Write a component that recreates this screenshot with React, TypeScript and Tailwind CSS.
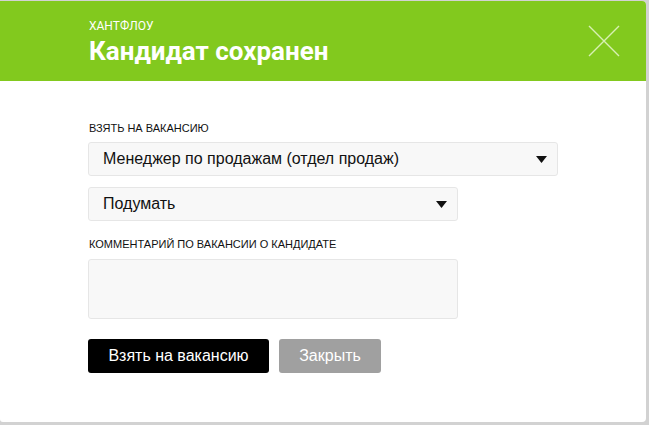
import React from 'react';

const Caret: React.FC = () => (
  <svg width="11" height="7" viewBox="0 0 11 7" className="shrink-0">
    <path d="M0 0 L11 0 L5.5 7 Z" fill="#111" />
  </svg>
);

const Select: React.FC<{ value: string; width: string }> = ({ value, width }) => (
  <div
    className={`${width} h-[34px] flex items-center justify-between pl-[14px] pr-[10px] bg-[#f8f8f8] border border-[#e6e6e6] rounded-[3px] text-[16px] text-[#111]`}
  >
    <span>{value}</span>
    <Caret />
  </div>
);

export default function App() {
  return (
    <div className="w-[649px] h-[425px] bg-[#d2d2d2] pt-px font-['Liberation_Sans',Arial,sans-serif]">
      <div className="w-[646px] h-[421px] bg-white rounded-r-[4px] rounded-bl-[3px] overflow-hidden flex flex-col">
        <div className="h-[80px] shrink-0 bg-[#82c91e] flex justify-between pl-[89px] pr-[26px]">
          <div className="pt-[18px] font-['Roboto',sans-serif] text-white">
            <div className="text-[12px] leading-[14px]">ХАНТФЛОУ</div>
            <div className="text-[26px] font-bold leading-[32px] mt-[2px]">Кандидат сохранен</div>
          </div>
          <svg width="32" height="32" viewBox="0 0 32 32" className="mt-[24px]">
            <path d="M1 1 L31 31 M31 1 L1 31" stroke="#d8f0b4" strokeWidth="1.4" />
          </svg>
        </div>
        <div className="pl-[88px] pt-[41px] flex flex-col">
          <div className="text-[11px] leading-[12px] text-[#111] pl-px">ВЗЯТЬ НА ВАКАНСИЮ</div>
          <div className="mt-[8px]">
            <Select value="Менеджер по продажам (отдел продаж)" width="w-[470px]" />
          </div>
          <div className="mt-[11px]">
            <Select value="Подумать" width="w-[370px]" />
          </div>
          <div className="mt-[17px] text-[11px] leading-[12px] text-[#111] pl-px">КОММЕНТАРИЙ ПО ВАКАНСИИ О КАНДИДАТЕ</div>
          <div className="mt-[9px] w-[370px] h-[60px] bg-[#f8f8f8] border border-[#e6e6e6] rounded-[3px]" />
          <div className="mt-[20px] flex gap-[10px]">
            <button className="w-[181px] h-[34px] bg-black text-white text-[16px] rounded-[3px]">Взять на вакансию</button>
            <button className="w-[102px] h-[34px] bg-[#a0a0a0] text-white text-[16px] rounded-[3px]">Закрыть</button>
          </div>
        </div>
      </div>
    </div>
  );
}
